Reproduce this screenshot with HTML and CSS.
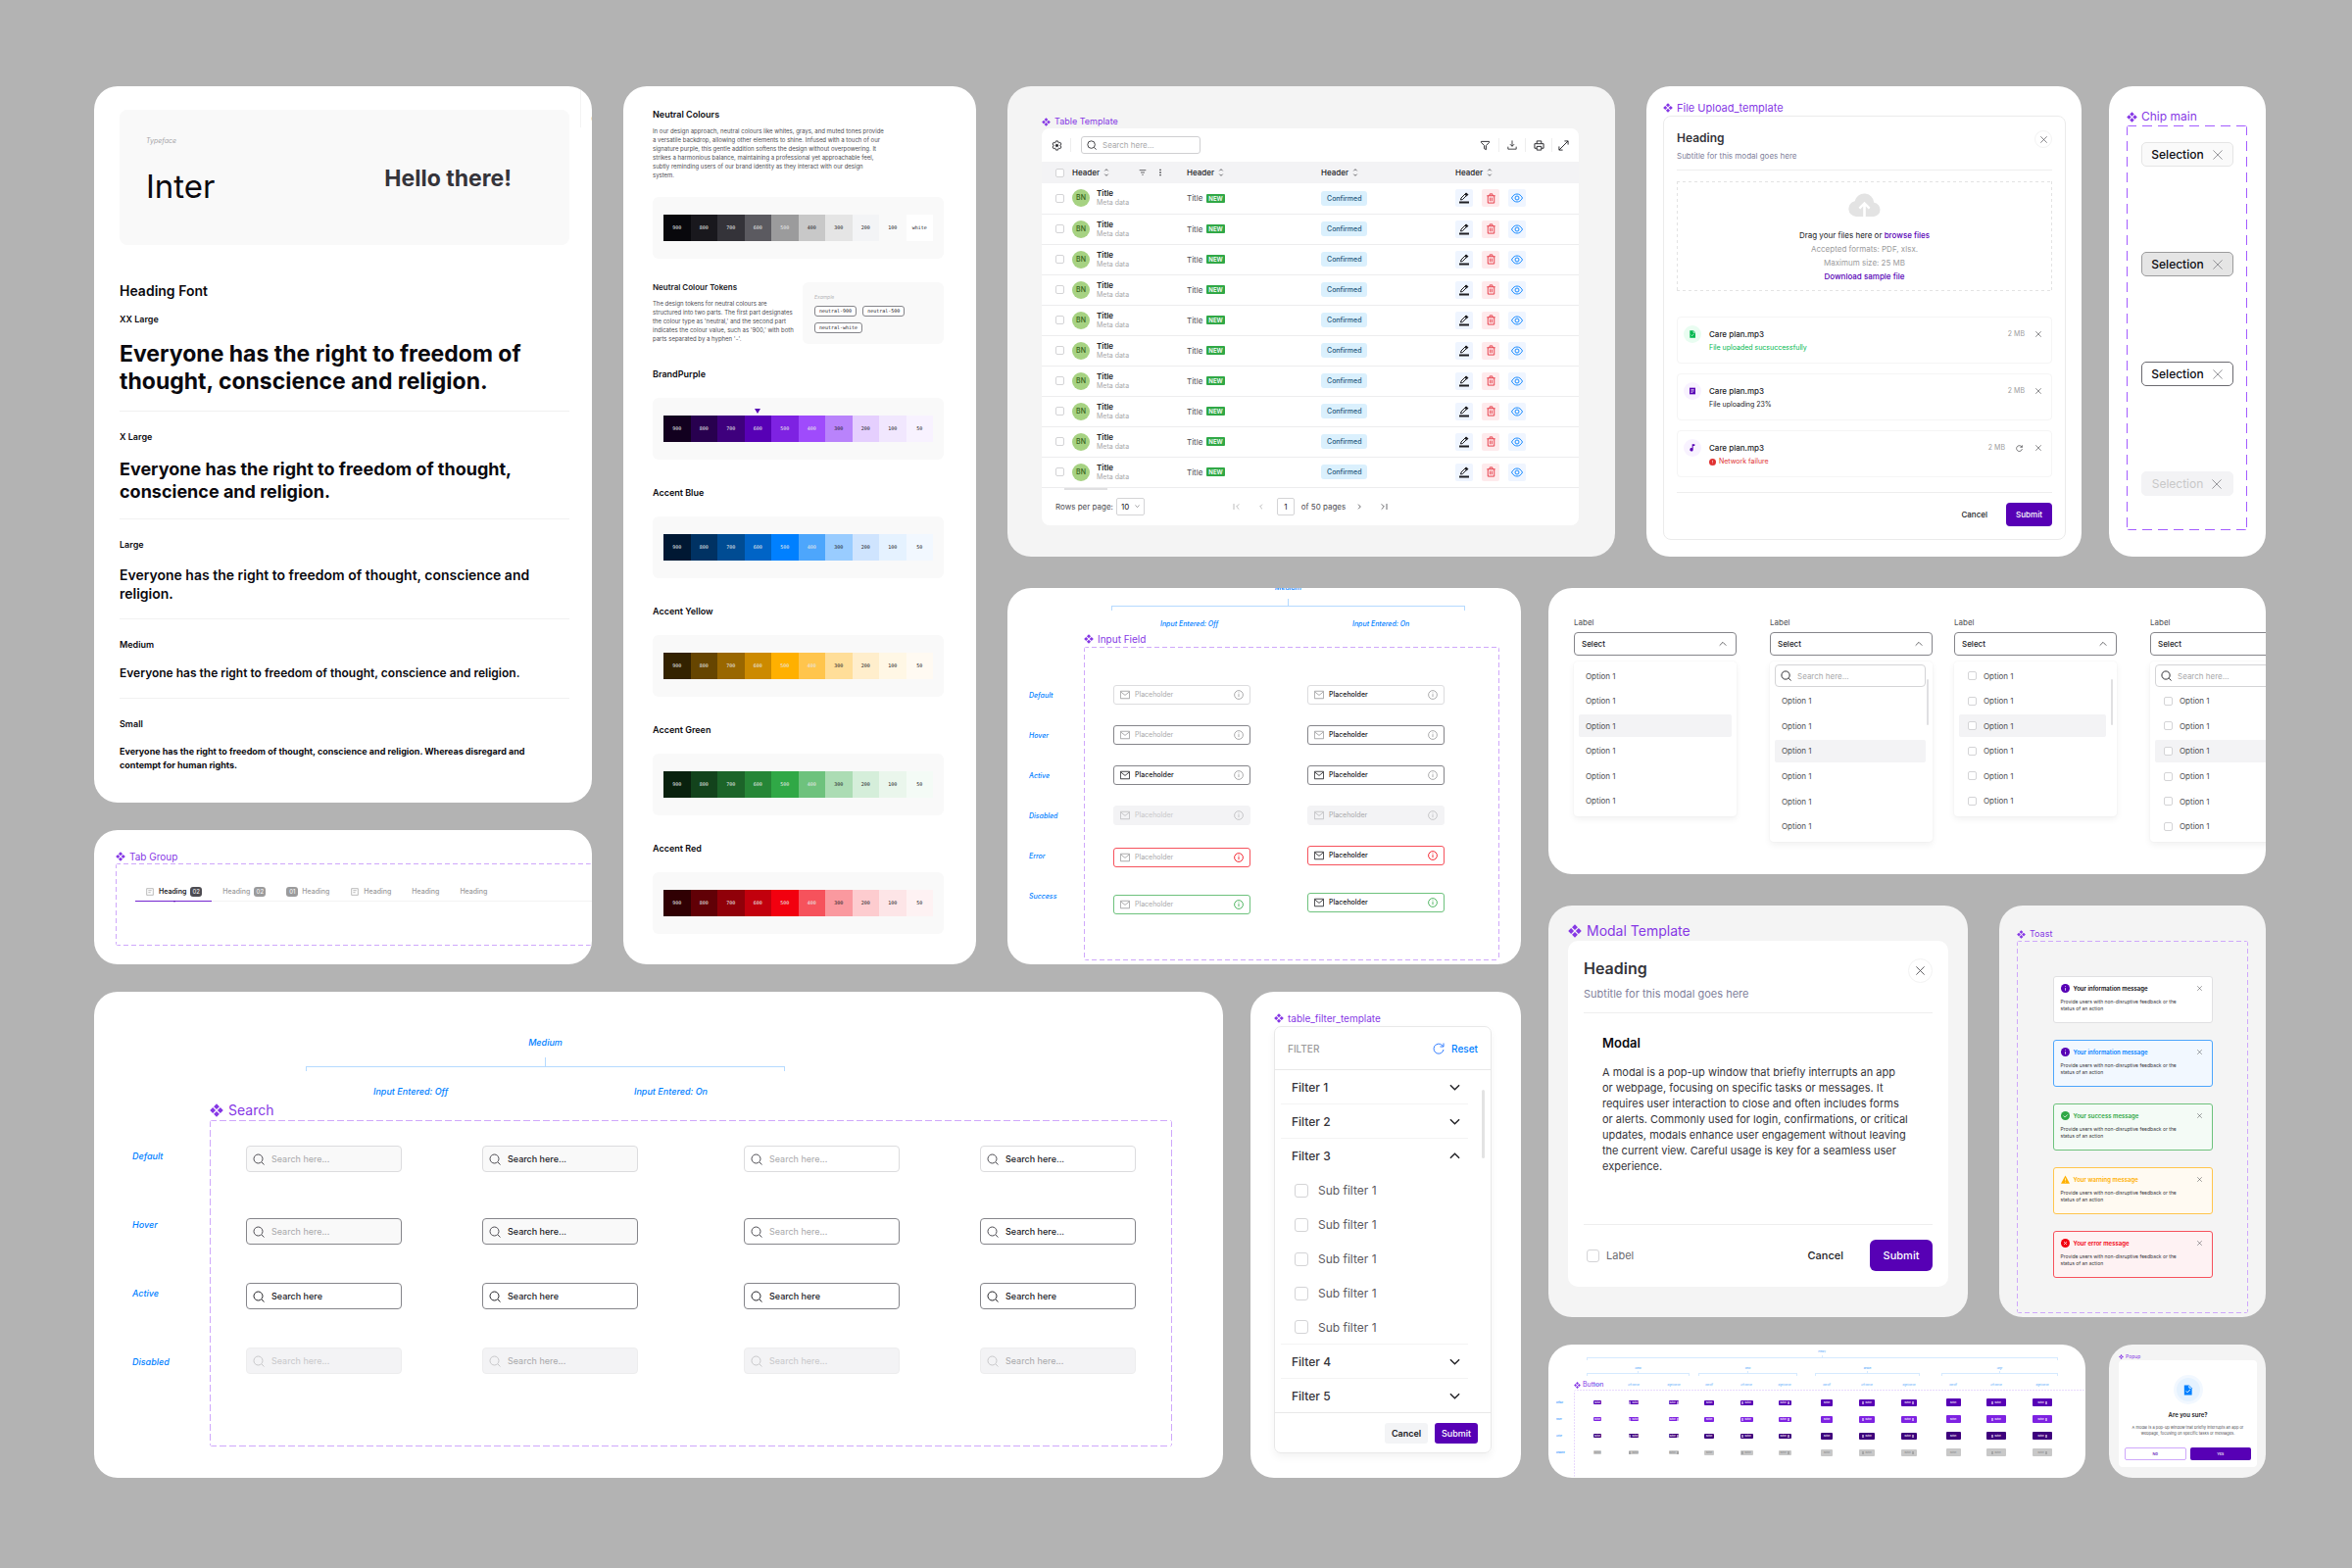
FILE: index.html
```html
<!DOCTYPE html>
<html lang="en">
<head>
<meta charset="utf-8">
<meta name="viewport" content="width=device-width, initial-scale=1">
<title>Design system overview</title>
<link rel="stylesheet" href="styles.css">
</head>
<body>
<svg class="sprite" aria-hidden="true">
  <symbol id="component" viewBox="0 0 12 12"><path fill="currentColor" d="M6 .2 8.5 2.7 6 5.2 3.5 2.7zM9.3 3.5 11.8 6 9.3 8.5 6.8 6zM6 6.8 8.5 9.3 6 11.8 3.5 9.3zM2.7 3.5 5.2 6 2.7 8.5.2 6z"/></symbol>
  <symbol id="gear" viewBox="0 0 24 24"><path d="M19.43 12.98c.04-.32.07-.64.07-.98s-.03-.66-.07-.98l2.11-1.65c.19-.15.24-.42.12-.64l-2-3.46a.5.5 0 0 0-.61-.22l-2.49 1c-.52-.4-1.08-.73-1.69-.98l-.38-2.65A.49.49 0 0 0 14 2h-4c-.25 0-.46.18-.49.42l-.38 2.65c-.61.25-1.17.59-1.69.98l-2.49-1a.5.5 0 0 0-.61.22l-2 3.46c-.13.22-.07.49.12.64l2.11 1.65a8 8 0 0 0 0 1.96l-2.11 1.65c-.19.15-.24.42-.12.64l2 3.46a.5.5 0 0 0 .61.22l2.49-1c.52.4 1.08.73 1.69.98l.38 2.65c.03.24.24.42.49.42h4c.25 0 .46-.18.49-.42l.38-2.65c.61-.25 1.17-.59 1.69-.98l2.49 1a.5.5 0 0 0 .61-.22l2-3.46c.12-.22.07-.49-.12-.64z"/><circle cx="12" cy="12" r="2.500" fill="currentColor"/></symbol>
  <symbol id="search" viewBox="0 0 24 24"><circle cx="11" cy="11" r="9"/><path d="m18 18 5 5"/></symbol>
  <symbol id="funnel" viewBox="0 0 24 24"><path d="M3 3h18v2l-7 7v9l-4-2v-7L3 5z"/></symbol>
  <symbol id="download" viewBox="0 0 24 24"><path d="M12 1v14M7 10l5 5 5-5M2 16v6h20v-6"/></symbol>
  <symbol id="print" viewBox="0 0 24 24"><path d="M7 8V2h10v6M7 18H2V8h20v10h-5M7 14h10v8H7z"/></symbol>
  <symbol id="expand" viewBox="0 0 24 24"><path d="M14 2h8v8M22 2 2 22M2 14v8h8"/></symbol>
  <symbol id="sort" viewBox="0 0 24 24"><path d="m7 7 5-5 5 5M7 17l5 5 5-5"/></symbol>
  <symbol id="lines" viewBox="0 0 24 24"><path d="M2 5h20M6 12h12M10 19h4"/></symbol>
  <symbol id="dots" viewBox="0 0 24 24"><path fill="currentColor" stroke="none" d="M10 2h4v4h-4zM10 10h4v4h-4zM10 18h4v4h-4z"/></symbol>
  <symbol id="pen" viewBox="0 0 24 24"><path d="M5 16l1-4L16 2l3 3L9 15z"/><path fill="currentColor" stroke="none" d="M13 5l3-4 5 4-4 4zM2 19h20v4H2z"/></symbol>
  <symbol id="trash" viewBox="0 0 24 24"><path d="M3 6h18M5 6v16h14V6M9 6V2h6v4M10 10v8M14 10v8"/></symbol>
  <symbol id="eye" viewBox="0 0 24 24"><path d="M1 12c3-6 7-8 11-8s8 2 11 8c-3 6-7 8-11 8S4 18 1 12z"/><circle cx="12" cy="12" r="4"/></symbol>
  <symbol id="down" viewBox="0 0 24 24"><path d="m2 7 10 10L22 7"/></symbol>
  <symbol id="up" viewBox="0 0 24 24"><path d="M2 17 12 7l10 10"/></symbol>
  <symbol id="left" viewBox="0 0 24 24"><path d="m15 5-7 7 7 7"/></symbol>
  <symbol id="right" viewBox="0 0 24 24"><path d="m9 5 7 7-7 7"/></symbol>
  <symbol id="first" viewBox="0 0 24 24"><path d="M3 3v18M19 4l-8 8 8 8"/></symbol>
  <symbol id="last" viewBox="0 0 24 24"><path d="M21 3v18M5 4l8 8-8 8"/></symbol>
  <symbol id="close" viewBox="0 0 24 24"><path d="m1 1 22 22M23 1 1 23"/></symbol>
  <symbol id="cloud" viewBox="0 0 33 24"><path fill="currentColor" stroke="none" d="M8 24A8 8 0 0 1 6.600 8.200 10 10 0 0 1 26.300 9.700 7.200 7.200 0 0 1 26 24h-8.200V13.500l3 3 1.700-1.700-6-6-6 6 1.700 1.700 3-3V24z"/></symbol>
  <symbol id="file" viewBox="0 0 24 24"><path fill="currentColor" stroke="none" d="M4 1h11l6 6v16H4z"/><path stroke="#fff" d="m8 14 3 3 6-6M15 2v5h5"/></symbol>
  <symbol id="list" viewBox="0 0 24 24"><path fill="currentColor" stroke="none" d="M3 2h18v20H3z"/><path stroke="#fff" d="M7 8h10M7 12h10M7 16h6"/></symbol>
  <symbol id="note" viewBox="0 0 24 24"><path d="M2 2h20v20H2zM7 8h10M7 14h7"/></symbol>
  <symbol id="music" viewBox="0 0 24 24"><path fill="currentColor" stroke="none" d="M11 1h8v5h-5v12a5 5 0 1 1-3-5z"/></symbol>
  <symbol id="reload" viewBox="0 0 24 24"><path d="M22 14a10 10 0 1 1-3-9l3 3M22 1v7h-7"/></symbol>
  <symbol id="alert" viewBox="0 0 24 24"><circle cx="12" cy="12" r="12" fill="currentColor" stroke="none"/><path stroke="#fff" d="M12 6v7M12 16v2"/></symbol>
  <symbol id="notice" viewBox="0 0 24 24"><circle cx="12" cy="12" r="12" fill="currentColor" stroke="none"/><path stroke="#fff" d="M12 6v2M12 11v7"/></symbol>
  <symbol id="done" viewBox="0 0 24 24"><circle cx="12" cy="12" r="12" fill="currentColor" stroke="none"/><path stroke="#fff" d="m7 12 4 4 7-7"/></symbol>
  <symbol id="warn" viewBox="0 0 24 24"><path fill="currentColor" stroke="none" d="M12 1 24 23H0z"/><path stroke="#fff" d="M12 9v6M12 18v2"/></symbol>
  <symbol id="fail" viewBox="0 0 24 24"><circle cx="12" cy="12" r="12" fill="currentColor" stroke="none"/><path stroke="#fff" d="m8 8 8 8M16 8l-8 8"/></symbol>
  <symbol id="mail" viewBox="0 0 24 24"><path d="M1 3h22v18H1zM2 5l10 8L22 5"/></symbol>
  <symbol id="info" viewBox="0 0 24 24"><circle cx="12" cy="12" r="10.500"/><path d="M12 10v7M12 6v2"/></symbol>
</svg>

<main class="board">
  <div class="area-left">
    <div class="stack">
      <section class="panel type-panel">
        <span class="clip-rule"></span><span class="clip-text">C</span>
        <div class="hero">
          <div>
            <p class="hero-note">Typeface</p>
            <p class="hero-name">Inter</p>
          </div>
          <p class="hero-hello">Hello there!</p>
        </div>
        <h2>Heading Font</h2>
        <div class="sample"><h3>XX Large</h3><p class="t-xxl">Everyone has the right to freedom of<br>thought, conscience and religion.</p></div>
        <div class="sample"><h3>X Large</h3><p class="t-xl">Everyone has the right to freedom of thought,<br>conscience and religion.</p></div>
        <div class="sample"><h3>Large</h3><p class="t-l">Everyone has the right to freedom of thought, conscience and<br>religion.</p></div>
        <div class="sample"><h3>Medium</h3><p class="t-m">Everyone has the right to freedom of thought, conscience and religion.</p></div>
        <div class="sample"><h3>Small</h3><p class="t-s">Everyone has the right to freedom of thought, conscience and religion. Whereas disregard and<br>contempt for human rights.</p></div>
      </section>

      <section class="panel tab-panel">
        <h2 class="tag tag-10"><svg class="icon i10"><use href="#component"/></svg>Tab Group</h2>
        <div class="frame tab-frame">
          <div class="tabs" role="tablist">
            <button class="tab is-active" role="tab" aria-selected="true"><svg class="icon i8"><use href="#note"/></svg>Heading<b>02</b></button>
            <button class="tab" role="tab">Heading<b>02</b></button>
            <button class="tab" role="tab"><b>01</b>Heading</button>
            <button class="tab" role="tab"><svg class="icon i8"><use href="#note"/></svg>Heading</button>
            <button class="tab" role="tab">Heading</button>
            <button class="tab" role="tab">Heading</button>
          </div>
        </div>
      </section>
    </div>

    <section class="panel colour-panel">
      <h2>Neutral Colours</h2>
      <p class="copy">In our design approach, neutral colours like whites, grays, and muted tones provide<br>a versatile backdrop, allowing other elements to shine. Infused with a touch of our<br>signature purple, this gentle addition softens the design without overpowering. It<br>strikes a harmonious balance, maintaining a professional yet approachable feel,<br>subtly reminding users of our brand identity as they interact with our design<br>system.</p>
      <div class="ramp ramp-first" data-ramp="neutral"></div>
      <div class="tokens">
        <div>
          <h3>Neutral Colour Tokens</h3>
          <p class="copy">The design tokens for neutral colours are<br>structured into two parts. The first part designates<br>the colour type as 'neutral,' and the second part<br>indicates the colour value, such as '900,' with both<br>parts separated by a hyphen '-'.</p>
        </div>
        <div class="token-box">
          <p>Example</p>
          <ul><li>neutral-900</li><li>neutral-500</li><li>neutral-white</li></ul>
        </div>
      </div>
      <h2>BrandPurple</h2><div class="ramp ramp-marked" data-ramp="purple"></div>
      <h2>Accent Blue</h2><div class="ramp" data-ramp="blue"></div>
      <h2>Accent Yellow</h2><div class="ramp" data-ramp="yellow"></div>
      <h2>Accent Green</h2><div class="ramp" data-ramp="green"></div>
      <h2>Accent Red</h2><div class="ramp" data-ramp="red"></div>
    </section>
  </div>

  <div class="area-top">
    <section class="panel table-panel">
      <h2 class="tag tag-9"><svg class="icon i9"><use href="#component"/></svg>Table Template</h2>
      <div class="table-card">
        <div class="toolbar">
          <button class="tool" aria-label="Settings"><svg class="icon i11"><use href="#gear"/></svg></button>
          <span class="sep"></span>
          <div class="table-search"><svg class="icon i10"><use href="#search"/></svg><input aria-label="Search table" placeholder="Search here..."></div>
          <div class="tools">
            <button class="tool" aria-label="Filter"><svg class="icon i11"><use href="#funnel"/></svg></button>
            <button class="tool" aria-label="Download"><svg class="icon i10"><use href="#download"/></svg></button>
            <button class="tool" aria-label="Print"><svg class="icon i11"><use href="#print"/></svg></button>
            <button class="tool" aria-label="Expand"><svg class="icon i11"><use href="#expand"/></svg></button>
          </div>
        </div>
        <table>
          <colgroup><col class="c-check"><col class="c-main"><col class="c-mid"><col class="c-mid"><col></colgroup>
          <thead><tr>
            <th><input type="checkbox" class="check c9" aria-label="Select all"></th>
            <th><span class="th">Header<svg class="icon i8"><use href="#sort"/></svg><svg class="icon i8 th-lines"><use href="#lines"/></svg><svg class="icon i8 th-dots"><use href="#dots"/></svg></span></th>
            <th><span class="th">Header<svg class="icon i8"><use href="#sort"/></svg></span></th>
            <th><span class="th">Header<svg class="icon i8"><use href="#sort"/></svg></span></th>
            <th><span class="th">Header<svg class="icon i8"><use href="#sort"/></svg></span></th>
          </tr></thead>
          <tbody id="rows"></tbody>
        </table>
        <div class="table-foot">
          <div class="per-page"><label for="per">Rows per page:</label><span class="select-box"><select id="per"><option>10</option></select><svg class="icon i5"><use href="#down"/></svg></span></div>
          <div class="pager">
            <button class="off" aria-label="First page"><svg class="icon i8"><use href="#first"/></svg></button>
            <button class="off" aria-label="Previous page"><svg class="icon i8"><use href="#left"/></svg></button>
            <input aria-label="Page" value="1"><span>of 50 pages</span>
            <button aria-label="Next page"><svg class="icon i8"><use href="#right"/></svg></button>
            <button aria-label="Last page"><svg class="icon i8"><use href="#last"/></svg></button>
          </div>
          <span class="h-scroll"></span>
        </div>
      </div>
    </section>

    <section class="panel upload-panel">
      <h2 class="tag tag-11"><svg class="icon i10"><use href="#component"/></svg>File Upload_template</h2>
      <div class="upload-card">
        <header><div><h3>Heading</h3><p>Subtitle for this modal goes here</p></div><button class="round" aria-label="Close"><svg class="icon i7"><use href="#close"/></svg></button></header>
        <div class="drop">
          <svg class="cloud"><use href="#cloud"/></svg>
          <p class="dark">Drag your files here or <a href="#">browse files</a></p>
          <p>Accepted formats: PDF, xlsx.</p>
          <p>Maximum size: 25 MB</p>
          <p><a href="#">Download sample file</a></p>
        </div>
        <ul class="files">
          <li class="ok"><span class="disc"><svg class="icon i8"><use href="#file"/></svg></span><div><h4>Care plan.mp3</h4><p>File uploaded sucsuccessfully</p></div><span class="size">2 MB</span><button aria-label="Remove"><svg class="icon i6"><use href="#close"/></svg></button></li>
          <li><span class="disc"><svg class="icon i8"><use href="#list"/></svg></span><div><h4>Care plan.mp3</h4><p>File uploading 23%</p></div><span class="size">2 MB</span><button aria-label="Remove"><svg class="icon i6"><use href="#close"/></svg></button></li>
          <li class="bad"><span class="disc"><svg class="icon i8"><use href="#music"/></svg></span><div><h4>Care plan.mp3</h4><p><svg class="icon i7"><use href="#alert"/></svg>Network failure</p></div><span class="size">2 MB</span><button class="retry" aria-label="Retry"><svg class="icon i7"><use href="#reload"/></svg></button><button aria-label="Remove"><svg class="icon i6"><use href="#close"/></svg></button></li>
        </ul>
        <footer><button class="plain">Cancel</button><button class="solid">Submit</button></footer>
      </div>
    </section>

    <section class="panel chip-panel">
      <h2 class="tag tag-12"><svg class="icon i11"><use href="#component"/></svg>Chip main</h2>
      <div class="frame chip-frame">
        <button class="chip">Selection<svg class="icon i10"><use href="#close"/></svg></button>
        <button class="chip is-hover">Selection<svg class="icon i10"><use href="#close"/></svg></button>
        <button class="chip is-active">Selection<svg class="icon i10"><use href="#close"/></svg></button>
        <button class="chip" disabled>Selection<svg class="icon i10"><use href="#close"/></svg></button>
      </div>
    </section>
  </div>

  <section class="panel area-mid input-panel">
    <div class="axis">
      <p>Medium</p><div class="bracket"></div>
      <div class="axis-pair"><span>Input Entered: Off</span><span>Input Entered: On</span></div>
    </div>
    <h2 class="tag tag-10"><svg class="icon i10"><use href="#component"/></svg>Input Field</h2>
    <ul class="states"><li>Default</li><li>Hover</li><li>Active</li><li>Disabled</li><li>Error</li><li>Success</li></ul>
    <div class="frame field-grid" id="fields"></div>
  </section>

  <div class="area-right">
    <section class="panel select-panel" id="selects"></section>
    <div class="row-modal">
      <section class="panel modal-panel">
        <h2 class="tag tag-14"><svg class="icon i14"><use href="#component"/></svg>Modal Template</h2>
        <div class="modal">
          <header><div><h3>Heading</h3><p>Subtitle for this modal goes here</p></div><button class="round" aria-label="Close"><svg class="icon i9"><use href="#close"/></svg></button></header>
          <div class="modal-body"><h4>Modal</h4><p>A modal is a pop-up window that briefly interrupts an app<br>or webpage, focusing on specific tasks or messages. It<br>requires user interaction to close and often includes forms<br>or alerts. Commonly used for login, confirmations, or critical<br>updates, modals enhance user engagement without leaving<br>the current view. Careful usage is key for a seamless user<br>experience.</p></div>
          <footer><label><input type="checkbox" class="check c13">Label</label><button class="plain">Cancel</button><button class="solid">Submit</button></footer>
        </div>
      </section>
      <section class="panel toast-panel">
        <h2 class="tag tag-9"><svg class="icon i9"><use href="#component"/></svg>Toast</h2>
        <div class="frame toast-frame">
          <article class="toast"><svg class="icon i9"><use href="#notice"/></svg><h3>Your information message</h3><button aria-label="Dismiss"><svg class="icon i5"><use href="#close"/></svg></button><p>Provide users with non-disruptive feedback or the<br>status of an action</p></article>
          <article class="toast t-blue"><svg class="icon i9"><use href="#notice"/></svg><h3>Your information message</h3><button aria-label="Dismiss"><svg class="icon i5"><use href="#close"/></svg></button><p>Provide users with non-disruptive feedback or the<br>status of an action</p></article>
          <article class="toast t-green"><svg class="icon i9"><use href="#done"/></svg><h3>Your success message</h3><button aria-label="Dismiss"><svg class="icon i5"><use href="#close"/></svg></button><p>Provide users with non-disruptive feedback or the<br>status of an action</p></article>
          <article class="toast t-yellow"><svg class="icon i9"><use href="#warn"/></svg><h3>Your warning message</h3><button aria-label="Dismiss"><svg class="icon i5"><use href="#close"/></svg></button><p>Provide users with non-disruptive feedback or the<br>status of an action</p></article>
          <article class="toast t-red"><svg class="icon i9"><use href="#fail"/></svg><h3>Your error message</h3><button aria-label="Dismiss"><svg class="icon i5"><use href="#close"/></svg></button><p>Provide users with non-disruptive feedback or the<br>status of an action</p></article>
        </div>
      </section>
    </div>
    <div class="row-button">
      <section class="panel button-panel">
        <div class="matrix-top">
          <p>Primary</p><div class="bracket matrix-bracket"></div>
          <div class="groups">
            <div><span>XSmall</span><div class="bracket"></div></div>
            <div><span>Small</span><div class="bracket"></div></div>
            <div class="g-medium"><span>Medium</span><div class="bracket"></div></div>
            <div><span>Large</span><div class="bracket"></div></div>
          </div>
        </div>
        <div class="matrix-mid"><h2 class="tag tag-7"><svg class="icon i7"><use href="#component"/></svg>Button</h2><div class="cols" id="variants"></div></div>
        <ul class="states"><li>Default</li><li>Hover</li><li>Active</li><li>Disabled</li></ul>
        <div class="frame matrix" id="matrix"></div>
      </section>
      <section class="panel popup-panel">
        <h2 class="tag tag-5"><svg class="icon i5"><use href="#component"/></svg>Popup</h2>
        <div class="popup">
          <span class="halo"><svg class="icon i11"><use href="#file"/></svg></span>
          <h3>Are you sure?</h3>
          <p>A modal is a pop-up window that briefly interrupts an app or<br>webpage, focusing on specific tasks or messages.</p>
          <footer><button class="outline">No</button><button class="solid">Yes</button></footer>
        </div>
      </section>
    </div>
  </div>

  <div class="area-bottom">
    <section class="panel search-panel">
      <div class="axis">
        <p>Medium</p><div class="bracket"></div>
        <div class="axis-pair"><span>Input Entered: Off</span><span>Input Entered: On</span></div>
      </div>
      <h2 class="tag tag-14"><svg class="icon i14"><use href="#component"/></svg>Search</h2>
      <ul class="states"><li>Default</li><li>Hover</li><li>Active</li><li>Disabled</li></ul>
      <div class="frame search-frame"><div class="search-grid"></div><div class="search-grid is-clear"></div></div>
    </section>

    <section class="panel filter-panel">
      <h2 class="tag tag-10"><svg class="icon i10"><use href="#component"/></svg>table_filter_template</h2>
      <div class="filter-card">
        <header><span>FILTER</span><button><svg class="icon i12"><use href="#reload"/></svg>Reset</button></header>
        <div class="filter-list">
          <span class="v-scroll"></span>
          <button>Filter 1<svg class="icon i11"><use href="#down"/></svg></button>
          <button>Filter 2<svg class="icon i11"><use href="#down"/></svg></button>
          <button class="is-open" aria-expanded="true">Filter 3<svg class="icon i11"><use href="#up"/></svg></button>
          <div class="subs">
            <label><input type="checkbox" class="check c14">Sub filter 1</label>
            <label><input type="checkbox" class="check c14">Sub filter 1</label>
            <label><input type="checkbox" class="check c14">Sub filter 1</label>
            <label><input type="checkbox" class="check c14">Sub filter 1</label>
            <label><input type="checkbox" class="check c14">Sub filter 1</label>
          </div>
          <button>Filter 4<svg class="icon i11"><use href="#down"/></svg></button>
          <button>Filter 5<svg class="icon i11"><use href="#down"/></svg></button>
        </div>
        <footer><button class="soft">Cancel</button><button class="solid">Submit</button></footer>
      </div>
    </section>
  </div>
</main>
<script src="app.js"></script>
</body>
</html>
```
FILE: styles.css
```css
:root {
  --purple: #5700b5;
  --label: #8638e5;
  --blue: #0080ff;
  --ink: #202024;
  --mid: #9b9b9c;
}

* { box-sizing: border-box; }
body { margin: 0; background: #b3b3b3; color: var(--ink); font-family: Inter, "Liberation Sans", sans-serif; }
h2, h3, h4, p, ul { margin: 0; padding: 0; }
ul { list-style: none; }
button, input, select { margin: 0; padding: 0; border: 0; background: none; color: inherit; font: inherit; letter-spacing: inherit; }
button { display: flex; align-items: center; justify-content: center; }
input, select { min-width: 0; outline: 0; }
select { appearance: none; opacity: 1; }
a { color: var(--purple); font-weight: 500; text-decoration: none; }

.sprite { position: absolute; width: 0; height: 0; }
.icon { display: block; flex: none; fill: none; stroke: currentColor; stroke-width: 2; }
.tag .icon, .cloud { stroke: none; }
.i5 { width: 5px; height: 5px; }
.i6 { width: 6px; height: 6px; }
.i7 { width: 7px; height: 7px; }
.i8 { width: 8px; height: 8px; }
.i9 { width: 9px; height: 9px; }
.i10 { width: 10px; height: 10px; }
.i11 { width: 11px; height: 11px; }
.i12 { width: 12px; height: 12px; }
.i14 { width: 14px; height: 14px; }

.check { appearance: none; flex: none; border: 1px solid #d4d4d6; background: #fff; }
.c9 { width: 9px; height: 9px; border-radius: 2px; }
.c13 { width: 13px; height: 13px; border-radius: 3px; }
.c14 { width: 14px; height: 14px; border-radius: 3px; }

.board {
  display: grid;
  grid-template: "left top top" minmax(484px, auto) "left mid right" minmax(384px, auto) "bottom bottom right" minmax(496px, auto) / minmax(0, 904fr) minmax(0, 524fr) minmax(0, 732fr);
  gap: 28px;
  padding: 88px 88px 92px 96px;
}
.panel { position: relative; overflow: hidden; min-width: 0; border-radius: 24px; background: #fff; }
.area-left { grid-area: left; display: grid; grid-template-columns: minmax(0, 508fr) minmax(0, 360fr); gap: 32px; padding-right: 4px; }
.stack { display: flex; flex-direction: column; gap: 28px; }
.area-top { grid-area: top; display: grid; grid-template-columns: minmax(0, 624fr) minmax(0, 444fr) minmax(0, 160fr); gap: 28px; padding-bottom: 4px; }
.area-mid { grid-area: mid; }
.area-right { grid-area: right; display: grid; grid-template-rows: minmax(292px, auto) auto 1fr; }
.area-bottom { grid-area: bottom; display: grid; grid-template-columns: minmax(0, 1152fr) minmax(0, 276fr); gap: 28px; }

.tag { display: flex; align-items: center; gap: 4px; color: var(--label); font-weight: 400; white-space: nowrap; }
.tag-5 { gap: 2px; font-size: 5px; line-height: 8px; }
.tag-7 { gap: 2px; font-size: 7px; line-height: 10px; }
.tag-9 { font-size: 9px; line-height: 14px; }
.tag-10 { font-size: 10px; line-height: 16px; }
.tag-11 { font-size: 11px; line-height: 16px; }
.tag-12 { font-size: 12px; line-height: 18px; }
.tag-14 { gap: 5px; font-size: 14px; line-height: 20px; }

/* Component-set outline with long dashes on all four sides */
.frame {
  --c: #cfa8fb;
  --d: 5px;
  --p: 8px;
  background:
    repeating-linear-gradient(90deg, var(--c) 0 var(--d), transparent var(--d) var(--p)) top / 100% 1px no-repeat,
    repeating-linear-gradient(90deg, var(--c) 0 var(--d), transparent var(--d) var(--p)) bottom / 100% 1px no-repeat,
    repeating-linear-gradient(180deg, var(--c) 0 var(--d), transparent var(--d) var(--p)) left / 1px 100% no-repeat,
    repeating-linear-gradient(180deg, var(--c) 0 var(--d), transparent var(--d) var(--p)) right / 1px 100% no-repeat;
  border-radius: 3px;
}

/* Typography */
.type-panel { flex: 732 0 auto; padding: 24px 23px 24px 26px; color: #0b0a0f; }
.clip-rule { position: absolute; top: 4px; right: 11px; width: 1px; height: 38px; background: #f3f3f3; }
.clip-text { position: absolute; top: 28px; right: -5px; color: #999; font-size: 8px; line-height: 10px; }
.hero { display: flex; justify-content: space-between; padding: 27px 59px 41px 27px; border-radius: 8px; background: #f9f9f9; }
.hero-note { color: #a5a5a8; font-size: 7px; font-style: italic; line-height: 10px; }
.hero-name { margin-top: 22px; color: #0b0a0f; font-size: 33px; line-height: 38px; }
.hero-hello { margin-top: 28px; color: #35343a; font-size: 23px; font-weight: 700; line-height: 30px; }
.type-panel h2 { margin: 38px 0 14px; font-size: 14px; font-weight: 600; line-height: 18px; }
.sample h3 { font-size: 9px; font-weight: 600; line-height: 12px; }
.sample p { margin-top: 15px; font-weight: 700; white-space: nowrap; }
.sample + .sample { margin-top: 16px; padding-top: 20px; border-top: 1px solid #f1f1f1; }
.t-xxl { font-size: 23px; line-height: 28px; }
.t-xl { font-size: 18px; line-height: 23px; }
.sample .t-l { font-size: 14px; font-weight: 600; line-height: 19px; }
.sample .t-m { font-size: 12px; font-weight: 600; line-height: 15px; padding-bottom: 2px; }
.t-s { font-size: 9px; line-height: 14px; }

.tab-panel { flex: 136 0 auto; padding: 20px 0 18px 22px; }
.tab-panel .tag { line-height: 14px; }
.tab-frame { padding: 17px 0 45px 20px; background-size: 100% 1px, 100% 1px, 1px 100%, 0 0; }
.tabs { display: flex; gap: 1px; border-bottom: 1px solid #f3f3f3; }
.tab { position: relative; gap: 4px; height: 21px; padding: 4px 10px 0; color: var(--mid); font-size: 7px; font-weight: 500; line-height: 10px; }
.tab b { width: 12px; border-radius: 3px; background: var(--mid); color: #fff; font-size: 6px; font-weight: 400; line-height: 10px; text-align: center; }
.tab .icon { margin: 0 1px; }
.tab.is-active { margin-bottom: -1px; height: 22px; border-bottom: 1px solid #7424d0; color: var(--ink); font-weight: 600; }
.tab.is-active .icon { color: var(--mid); }
.tab.is-active b { background: #4d4c52; }
.tab.is-active::after { content: ""; position: absolute; top: 21px; left: 50%; border: 1px solid transparent; border-top: 2px solid var(--purple); }

/* Colour ramps */
.colour-panel { padding: 23px 33px 30px 30px; }
.colour-panel h2 { margin-top: 28px; font-size: 9px; font-weight: 600; line-height: 11px; color: #0b0a0f; }
.colour-panel h2:first-child { margin-top: 0; }
.copy { margin-top: 7px; color: #4d4c52; font-size: 6px; line-height: 9px; white-space: nowrap; }
.ramp { display: flex; margin-top: 19px; padding: 18px 11px; border-radius: 6px; background: #f9f9f9; }
.ramp-first { margin-top: 18px; }
.ramp span { position: relative; flex: 1; height: 27px; text-align: center; font: 5px/27px "DejaVu Sans Mono", "Liberation Mono", monospace; }
.ramp .on-dark { color: #e8e8e8; }
.ramp-marked span:nth-child(4)::before { content: ""; position: absolute; top: -7px; left: 50%; margin-left: -3px; border: 3px solid transparent; border-top: 5px solid var(--purple); border-bottom: 0; }
.tokens { display: grid; grid-template-columns: 1fr 144px; margin: 24px 0 25px; }
.tokens h3 { font-size: 8px; font-weight: 600; line-height: 10px; }
.tokens + h2 { margin-top: 0; }
.token-box { padding: 11px 12px; border-radius: 6px; background: #f9f9f9; }
.token-box p { color: #b5b5b8; font-size: 5px; font-style: italic; line-height: 8px; }
.token-box ul { display: flex; flex-wrap: wrap; gap: 6px; margin-top: 5px; }
.token-box li { padding: 0 4px; border: 1px solid #85858a; border-radius: 3px; background: #fff; font: 5px/9px "DejaVu Sans Mono", "Liberation Mono", monospace; }

/* Table */
.table-panel { margin-right: 4px; padding: 29px 37px 0 35px; background: #f4f4f4; }
.table-card { overflow: hidden; border-radius: 8px; background: #fff; font-size: 8px; line-height: 10px; }
.toolbar { display: flex; align-items: center; height: 34px; padding: 0 10px; }
.sep { width: 1px; height: 14px; margin: 0 10px 0 8px; background: #eee; }
.table-search { display: flex; align-items: center; gap: 6px; width: 122px; height: 18px; padding: 0 5px; border: 1px solid #cfcfd1; border-radius: 3px; }
.table-search input { flex: 1; }
input::placeholder { color: #a8a8aa; opacity: 1; }
.tools { display: flex; margin-left: auto; }
.tool { height: 14px; }
.tools .tool { width: 27px; }
.tools .tool:last-child { width: 18px; justify-content: flex-end; }
.tools .tool + .tool { border-left: 1px solid #eee; }
table { width: 100%; border-collapse: collapse; table-layout: fixed; }
.c-check { width: 31px; }
.c-main { width: 117px; }
.c-mid { width: 137px; }
th, td { padding: 0; text-align: left; }
th { height: 22px; background: #f3f3f5; font-weight: 500; }
th:first-child, td:first-child { padding-left: 14px; }
th .check, td .check { display: block; }
.th { display: flex; align-items: center; gap: 3px; }
.th .th-lines { margin-left: 26px; }
.th .th-dots { margin-left: 7px; }
td { height: 31px; border-bottom: 1px solid #ededee; }
.person { display: grid; grid-template-columns: 18px 1fr; column-gap: 7px; align-items: center; }
.person i { grid-row: span 2; height: 18px; border-radius: 50%; background: #a6d282; color: #35611b; font-size: 7px; font-style: normal; font-weight: 500; line-height: 18px; text-align: center; }
.person b { font-weight: 600; }
.person small { color: #a8a8aa; font-size: 7px; }
.new { display: flex; align-items: center; gap: 4px; color: #4d4c52; }
.new b { padding: 0 2px; border-radius: 1px; background: #30a846; color: #fff; font-size: 6px; font-weight: 600; line-height: 9px; }
.pill { padding: 3px 6px; border-radius: 3px; background: #daf0fd; color: #285a7e; font-size: 7px; font-weight: 500; }
.acts { display: flex; gap: 9px; }
.acts button { width: 18px; height: 18px; border-radius: 2px; background: #eff5ff; }
.acts .del { background: #feeaec; color: #e5333f; }
.acts .see { color: #1a8cff; }
.table-foot { position: relative; display: grid; grid-template-columns: 1fr auto 1fr; align-items: center; height: 38px; padding: 0 14px; color: #4d4c52; }
.h-scroll { position: absolute; top: 0; left: 23px; width: 44px; height: 2px; background: #e0e0e2; }
.per-page { display: flex; align-items: center; gap: 3px; }
.select-box { display: flex; align-items: center; height: 18px; padding: 0 4px; border: 1px solid #d4d4d6; border-radius: 2px; color: var(--ink); }
.select-box select { width: 14px; }
.pager { display: flex; align-items: center; }
.pager button { width: 24px; height: 18px; color: var(--ink); }
.pager button + button { margin-left: 1px; }
.pager .off { color: var(--mid); }
.pager input { width: 18px; height: 18px; margin: 0 7px 0 4px; border: 1px solid #d4d4d6; border-radius: 2px; color: var(--ink); text-align: center; }
.pager span { margin-right: 2px; }

/* Shared buttons */
.solid { background: var(--purple); color: #fff; font-weight: 500; }
.soft { background: #f3f4f6; font-weight: 600; }
.plain { font-weight: 500; }
.outline { border: 1px solid #cfa8fb; color: var(--purple); font-weight: 500; }
.round { flex: none; border: 1px solid #f3f3f3; border-radius: 50%; color: #35343a; }

/* File upload */
.upload-panel { padding: 14px 16px 17px 17px; }
.upload-card { padding: 0 13px; border: 1px solid #ebebeb; border-radius: 8px; font-size: 8px; line-height: 10px; }
.upload-card header { display: flex; justify-content: space-between; padding: 14px 0 9px; border-bottom: 1px solid #eee; }
.upload-card h3 { font-size: 12px; font-weight: 600; line-height: 15px; color: #35343a; }
.upload-card header p { margin-top: 6px; color: #817f9b; }
.upload-card .round { width: 18px; height: 18px; }
.drop {
  margin-top: 11px;
  padding: 12px 0 8px;
  text-align: center;
  color: var(--mid);
  line-height: 14px;
  background:
    repeating-linear-gradient(90deg, #e3e3e3 0 3px, transparent 3px 6px) top / 100% 1px no-repeat,
    repeating-linear-gradient(90deg, #e3e3e3 0 3px, transparent 3px 6px) bottom / 100% 1px no-repeat,
    repeating-linear-gradient(180deg, #e3e3e3 0 3px, transparent 3px 6px) left / 1px 100% no-repeat,
    repeating-linear-gradient(180deg, #e3e3e3 0 3px, transparent 3px 6px) right / 1px 100% no-repeat;
}
.cloud { display: block; width: 33px; height: 24px; margin: 0 auto 12px; color: #e3e3e3; }
.drop .dark { color: var(--ink); }
.files { display: grid; gap: 10px; margin-top: 26px; }
.files li { display: flex; gap: 8px; height: 48px; padding: 8px 7px 0 6px; border: 1px solid #f5f5f5; border-radius: 4px; }
.files div { flex: 1; padding-top: 4px; }
.files h4 { font-size: 8px; font-weight: 500; }
.files p { display: flex; align-items: center; gap: 3px; margin-top: 4px; font-size: 7px; }
.files .ok p { color: #00b84f; }
.files .bad p { color: #e03131; }
.disc { display: grid; place-items: center; width: 18px; height: 18px; border-radius: 50%; background: #f8f2ff; color: var(--purple); }
.ok .disc { background: #e9fdf1; color: #00b84f; }
.size { color: var(--mid); font-size: 7px; line-height: 18px; }
.files button { width: 12px; height: 18px; }
.upload-card footer { display: flex; justify-content: flex-end; gap: 19px; margin-top: 15px; padding: 10px 0 13px; border-top: 1px solid #eee; }
.upload-card .solid { width: 47px; height: 24px; border-radius: 4px; }

/* Chips */
.chip-panel { padding: 22px 19px 0 18px; }
.chip-frame { --c: #a35cff; --d: 10px; --p: 16px; display: flex; flex-direction: column; align-items: center; gap: 87px; padding: 17px 0 35px; }
.chip { gap: 9px; width: 94px; height: 25px; border: 1px solid #e5e5e5; border-radius: 5px; background: #fafafa; color: #0b0a0f; font-size: 12px; font-weight: 500; }
.chip .icon { color: #85858a; }
.chip.is-hover { border-color: #9b9b9c; background: #e5e5e5; }
.chip.is-active { border-color: #6b6a70; background: #fff; }
.chip:disabled { border-color: #f3f3f5; background: #f3f3f5; color: #c8c8c8; font-weight: 400; }

/* State sheets: axis on top, state names on the left */
.input-panel, .search-panel { display: grid; align-content: start; }
.axis { grid-column: 2; color: var(--blue); font-style: italic; font-weight: 500; }
.axis p { text-align: center; }
.axis-pair { display: grid; }
.bracket { color: #b5daff; }
.bracket::before { content: ""; display: block; width: 1px; height: var(--stem, 7px); margin: 0 auto; background: currentColor; }
.bracket::after { content: ""; display: block; height: 4px; border: 1px solid; border-bottom: 0; }
.input-panel > .tag, .search-panel > .tag { grid-column: 2; }
.states { display: flex; flex-direction: column; color: var(--blue); font-style: italic; font-weight: 500; }

.input-panel { grid-template-columns: 56px minmax(0, 1fr); padding: 0 22px; font-size: 7px; line-height: 10px; }
.input-panel .axis { margin: -4px 35px 0 28px; }
.input-panel .axis p { margin-bottom: 7px; line-height: 8px; }
.input-panel .axis-pair { grid-template-columns: 196px 1fr; padding: 9px 0 2px 50px; }
.input-panel .states { gap: 31px; padding-top: 45px; }
.field-grid { display: grid; grid-template-columns: 1fr 1fr; gap: 21px 58px; padding: 39px 56px 47px 30px; }
.field { display: flex; align-items: center; gap: 5px; height: 20px; padding: 0 6px; border: 1px solid #dcdcde; border-radius: 3px; background: #fff; color: var(--mid); }
.field input { flex: 1; width: 0; font-weight: 400; }
.field.filled input { color: var(--ink); font-weight: 500; }
.field.hover, .field.active { border-color: #85858a; }
.field.active .lead { color: var(--ink); }
.field.disabled { border-color: #f3f3f5; background: #f3f3f5; color: #bdbdbf; }
.field.disabled input { color: #a8a8aa; font-weight: 400; }
.field.disabled input::placeholder { color: #c8c8ca; }
.field.late { margin-top: 2px; }
.field.success { margin-top: 5px; }
.field.success.late { margin-top: 7px; }
.field.error { border-color: #f6525c; }
.field.error .info { color: #f2000f; }
.field.success { border-color: #6ec27d; }
.field.success .info { color: #30a846; }
.field.filled.error .lead, .field.filled.success .lead { color: var(--ink); }

.search-panel { grid-template-columns: 79px minmax(0, 1fr); padding: 46px 52px 0 39px; font-size: 9px; line-height: 12px; }
.search-panel .axis { --stem: 9px; margin-left: 98px; width: 489px; }
.search-panel .axis p { margin-bottom: 9px; }
.search-panel .axis-pair { grid-template-columns: 266px 1fr; padding: 15px 0 3px 69px; }
.search-panel .states { gap: 58px; padding-top: 31px; }
.search-frame { --d: 7px; --p: 10px; display: grid; grid-template-columns: 1fr 1fr; gap: 108px; padding: 26px 37px 74px; }
.search-grid { display: grid; grid-template-columns: 1fr 1fr; gap: 39px 82px; }
.search-grid .field { gap: 7px; height: 27px; border-radius: 4px; padding: 0 6px; background: #f9f9f9; }
.search-grid .lead { color: #4d4c52; }
.search-grid .default { margin-bottom: 8px; }
.search-grid.is-clear .field, .search-grid .field.active { background: #fff; }
.search-grid .field.disabled, .search-grid.is-clear .field.disabled { border-color: #ededee; background: #f3f3f5; }
.search-grid .disabled .lead { color: #c8c8ca; }

/* Select menus */
.select-panel { display: flex; gap: 22px; padding: 30px 0 0 26px; color: #4d4c52; font-size: 8px; line-height: 10px; }
.select-pair { display: flex; flex: none; gap: 34px; }
.picker { width: 166px; }
.picker > label { display: block; }
.picker-box { display: grid; align-items: center; height: 24px; margin: 5px 0 6px; padding: 0 7px; border: 1px solid #85858a; border-radius: 4px; color: var(--ink); }
.picker-box select { grid-area: 1 / 1; font-weight: 500; }
.picker-box .icon { grid-area: 1 / 1; justify-self: end; margin-right: 2px; }
.menu { position: relative; display: grid; align-content: space-between; height: 158px; padding: 3px 5px 4px; border-radius: 4px; box-shadow: 0 3px 7px #0000000f, 0 0 2px #0000000f; }
.menu.has-search { height: 184px; }
.menu.scrolls { padding-right: 11px; }
.menu.scrolls::after { content: ""; position: absolute; top: 18px; right: 4px; width: 2px; height: 47px; border-radius: 1px; background: #e0e0e2; }
.menu li { display: flex; align-items: center; height: 23px; padding: 0 7px; border-radius: 2px; }
.menu li.is-on { background: #f3f3f5; }
.menu li.menu-search { gap: 6px; padding: 0 5px; border: 1px solid #d4d4d6; border-radius: 4px; }
.menu-search input { flex: 1; }
.menu label { display: flex; align-items: center; gap: 7px; padding-left: 2px; }
.menu-search .icon { color: var(--ink); }

/* Modal and toasts */
.row-modal { display: grid; grid-template-columns: minmax(0, 428fr) minmax(0, 272fr); gap: 32px; margin-top: 32px; }
.modal-panel { padding: 16px 20px 31px; background: #f4f4f4; }
.modal { padding: 0 16px; border-radius: 10px; background: #fff; font-size: 11px; line-height: 16px; }
.modal header { display: flex; justify-content: space-between; padding: 18px 0 12px; border-bottom: 1px solid #eee; }
.modal h3 { color: #35343a; font-size: 16px; font-weight: 600; line-height: 20px; }
.modal header p { margin-top: 9px; color: #817f9b; line-height: 14px; }
.modal .round { width: 25px; height: 25px; }
.modal-body { padding: 22px 19px 51px; color: #35343a; }
.modal-body h4 { margin-bottom: 14px; color: #0b0a0f; font-size: 13px; font-weight: 600; }
.modal-body p { white-space: nowrap; }
.modal footer { display: flex; align-items: center; gap: 27px; padding: 15px 0 16px; border-top: 1px solid #eee; }
.modal footer label { display: flex; align-items: center; gap: 7px; margin: 0 auto 0 3px; color: #6b6a70; }
.modal .solid { width: 64px; height: 32px; border-radius: 6px; }

.toast-panel { padding: 22px 18px 3px; background: #f4f4f4; }
.toast-frame { display: grid; gap: 17px; justify-content: center; padding: 36px 0; }
.toast { --t: #0b0a0f; display: grid; grid-template-columns: 9px 1fr auto; column-gap: 4px; align-content: start; width: 163px; height: 48px; padding: 7px 10px 0 7px; border: 1px solid #e0e0e2; border-radius: 3px; background: #fff; font-size: 5px; line-height: 7px; }
.toast h3 { color: var(--t); font-size: 6px; font-weight: 600; line-height: 9px; }
.toast p { grid-column: 1 / -1; margin-top: 6px; color: #35343a; white-space: nowrap; }
.toast > .icon { color: var(--purple); }
.t-blue { --t: #0080ff; border-color: #4da6fc; background: #f2f8ff; }
.t-green { --t: #30a846; border-color: #6ec27d; background: #f4fbf6; }
.t-yellow { --t: #ffb000; border-color: #ffc54d; background: #fffaf2; }
.t-red { --t: #f2000f; border-color: #f6525c; background: #fef2f3; }
.t-green > .icon, .t-yellow > .icon, .t-red > .icon { color: var(--t); }

/* Button matrix */
.row-button { display: grid; grid-template-columns: minmax(0, 548fr) minmax(0, 160fr); gap: 24px; margin-top: 28px; }
.button-panel { display: grid; grid-template-columns: 18px minmax(0, 1fr); grid-template-rows: auto auto 1fr; padding: 6px 0 0 8px; font-size: 2px; line-height: 3px; }
.matrix-top, .cols { color: #4da6fc; font-style: italic; font-weight: 500; }
.matrix-top { grid-column: 2; width: 498px; padding-left: 8px; text-align: center; }
.button-panel .bracket { --stem: 2px; color: #d5eaff; }
.button-panel .bracket::after { height: 2px; }
.matrix-bracket { margin: 2px 4px 7px 5px; }
.groups { display: grid; grid-template-columns: 114px 110px 138px 128px; }
.groups > div { padding: 0 4px 0 5px; }
.groups .g-medium { padding: 0 17px 0 14px; }
.groups .bracket { margin-top: 1px; }
.groups span { display: block; }
.matrix-mid { grid-column: 2; display: grid; align-items: center; margin-top: 4px; }
.matrix-mid > * { grid-area: 1 / 1; }
.cols { display: grid; grid-template-columns: 32px 42px 40px 32px 44px 34px 52px 30px 56px 34px 54px 40px; padding-left: 8px; place-items: center; }
.button-panel .states { gap: 14px; padding-top: 12px; }
.matrix { --c: #e9dafd; --d: 2px; --p: 3px; padding: 9px 0 0 8px; display: grid; align-content: start; gap: 9px; background-size: 100% 1px, 0 0, 1px 100%, 0 0; }
.matrix .cols { padding: 0; height: 8px; font-style: normal; }
.matrix button { gap: 1px; border-radius: 1px; color: #fff; }
.matrix button svg { width: 2px; height: 3px; fill: none; stroke: currentColor; stroke-width: 4; }
.s0 button { background: #5700b5; }
.s1 button { background: #7e22e2; }
.s2 button { background: #3e007d; }
.matrix .s3 button { background: #c8c8c8; color: #8a8a8c; }
.xs { width: 8px; height: 4px; }
.sm { width: 10px; height: 5px; }
.md { width: 12px; height: 7px; }
.lg { width: 15px; height: 8px; }
.xs.wide { width: 10px; }
.sm.wide { width: 13px; }
.md.wide { width: 16px; }
.lg.wide { width: 20px; }

.popup-panel { padding: 8px 9px 11px 10px; background: #f4f4f4; }
.popup { padding: 15px 6px 7px; border-radius: 4px; background: #fff; text-align: center; }
.halo { display: grid; place-items: center; width: 30px; height: 30px; margin: 0 auto; border: 3px solid #f2f8ff; border-radius: 50%; background: #e5f2ff; color: var(--blue); }
.popup h3 { margin-top: 7px; color: var(--ink); font-size: 6px; font-weight: 600; line-height: 8px; }
.popup p { margin-top: 6px; color: #4d4c52; font-size: 4px; line-height: 6px; white-space: nowrap; }
.popup footer { display: grid; grid-template-columns: 1fr 1fr; gap: 4px; margin-top: 11px; font-size: 4px; }
.popup button { height: 13px; border-radius: 2px; }

/* Filter panel */
.filter-panel { padding: 19px 30px 25px 24px; }
.filter-card { border: 1px solid #e8e8e8; border-radius: 7px; box-shadow: 0 4px 8px #0000000d; }
.filter-card header { display: flex; align-items: center; justify-content: space-between; height: 43px; padding: 0 13px; color: var(--mid); font-size: 10px; }
.filter-card header span { font-weight: 500; }
.filter-card header button { gap: 7px; color: var(--blue); font-weight: 500; }
.filter-card header .icon { color: #2f7bff; }
.filter-list { position: relative; padding: 0 23px 0 6px; border: 1px solid #e8e8e8; border-width: 1px 0; font-size: 12px; }
.filter-list > button { justify-content: space-between; width: 100%; height: 35px; padding: 0 8px 0 11px; border-bottom: 1px solid #f3f3f3; color: #35343a; font-weight: 500; }
.filter-list .icon { stroke-width: 3; color: var(--ink); }
.filter-list > .is-open { border: 0; }
.filter-list > button:last-child { height: 34px; border: 0; }
.subs { border-bottom: 1px solid #f3f3f3; color: #5c5b61; }
.subs label { display: flex; align-items: center; gap: 10px; height: 35px; padding-left: 14px; }
.subs label:last-child { height: 34px; }
.v-scroll { position: absolute; top: 20px; right: 6px; width: 3px; height: 70px; border-radius: 2px; background: #e3e3e3; }
.filter-card footer { display: flex; justify-content: flex-end; gap: 7px; padding: 10px 13px 9px 0; font-size: 9px; }
.filter-card footer button { width: 44px; height: 21px; border-radius: 3px; }
```
FILE: app.js
```js
const icon = (id, cls) => `<svg class="icon ${cls}" aria-hidden="true"><use href="#${id}"/></svg>`;
const fill = (sel, html) => { document.querySelector(sel).innerHTML = html; };

// Colour ramps, darkest step first
const ramps = {
  neutral: ['#08080c', '#19181d', '#343339', '#5b5a60', '#9b9b9c', '#c8c8c8', '#e5e5e5', '#f3f4f6', '#f9f9f9', '#ffffff'],
  purple: ['#12001f', '#28004f', '#3e007d', '#5700b5', '#7e22e2', '#9f4bfc', '#b983fb', '#e5cffe', '#f1e7fe', '#f8f2ff'],
  blue: ['#001833', '#003263', '#004c93', '#0064c6', '#0080ff', '#4da6fc', '#99ccff', '#cfe4fe', '#e5f2ff', '#f2f8ff'],
  yellow: ['#332200', '#664500', '#996700', '#cc8a00', '#ffb000', '#ffc54d', '#ffde99', '#ffeecc', '#fff7e5', '#fffaf2'],
  green: ['#09210e', '#13431c', '#1c6429', '#268637', '#30a846', '#6ec27d', '#acdcb4', '#d5eeda', '#eaf6ec', '#f4fbf6'],
  red: ['#300003', '#610006', '#900009', '#c2000d', '#f2000f', '#f6525c', '#fa999f', '#fdcccf', '#fde5e7', '#fef2f3']
};
document.querySelectorAll('[data-ramp]').forEach((el) => {
  const last = el.dataset.ramp === 'neutral' ? [200, 100, 'white'] : [200, 100, 50];
  const steps = [900, 800, 700, 600, 500, 400, 300, ...last];
  const darkCount = el.dataset.ramp === 'neutral' ? 5 : 6;
  el.innerHTML = ramps[el.dataset.ramp]
    .map((c, i) => `<span class="${i < darkCount ? 'on-dark' : ''}" style="background:${c}">${steps[i]}</span>`).join('');
});

fill('#rows', `<tr>
  <td><input type="checkbox" class="check c9" aria-label="Select row"></td>
  <td><div class="person"><i>BN</i><b>Title</b><small>Meta data</small></div></td>
  <td><div class="new">Title<b>NEW</b></div></td>
  <td><span class="pill">Confirmed</span></td>
  <td><div class="acts"><button aria-label="Edit">${icon('pen', 'i12')}</button><button class="del" aria-label="Delete">${icon('trash', 'i11')}</button><button class="see" aria-label="View">${icon('eye', 'i12')}</button></div></td>
</tr>`.repeat(10));

const field = (state, filled, late) => `<div class="field ${state} ${filled ? 'filled' : ''} ${late ? 'late' : ''}">
  ${icon('mail', 'i10 lead')}<input aria-label="${state} field" ${filled ? 'value' : 'placeholder'}="Placeholder" ${state === 'disabled' ? 'disabled' : ''}>${icon('info', 'i10 info')}</div>`;
fill('#fields', ['default', 'hover', 'active', 'disabled', 'error', 'success']
  .map((s, i) => field(s, s === 'active', i > 3) + field(s, true, false)).join(''));

const searchField = (state, filled) => {
  const text = state === 'active' ? 'Search here' : 'Search here...';
  const on = filled || state === 'active';
  return `<div class="field ${state} ${on ? 'filled' : ''}">${icon('search', 'i12 lead')}<input aria-label="${state} search" ${on ? 'value' : 'placeholder'}="${text}" ${state === 'disabled' ? 'disabled' : ''}></div>`;
};
document.querySelectorAll('.search-grid').forEach((grid) => {
  grid.innerHTML = ['default', 'hover', 'active', 'disabled'].map((s) => searchField(s, false) + searchField(s, true)).join('');
});

const picker = (n, search, checks) => {
  const option = (i) => `<li class="${i === 2 ? 'is-on' : ''}">${checks ? '<label><input type="checkbox" class="check c9">Option 1</label>' : 'Option 1'}</li>`;
  return `<div class="picker"><label for="pick${n}">Label</label>
    <div class="picker-box"><select id="pick${n}"><option>Select</option></select>${icon('up', 'i8')}</div>
    <ul class="menu ${search || checks ? 'scrolls' : ''} ${search ? 'has-search' : ''}">
      ${search ? `<li class="menu-search">${icon('search', 'i11')}<input aria-label="Search options" placeholder="Search here..."></li>` : ''}
      ${[0, 1, 2, 3, 4, 5].map(option).join('')}
    </ul></div>`;
};
fill('#selects', `<div class="select-pair">${picker(1, false, false)}${picker(2, true, false)}</div>
  <div class="select-pair">${picker(3, false, true)}${picker(4, true, true)}</div>`);

fill('#variants', ['Icon Off', 'Left icon On', 'Right icon On'].map((t) => `<span>${t}</span>`).join('').repeat(4));
const dot = '<svg viewBox="0 0 12 20"><path d="M2 2h8v16H2z"/></svg>';
fill('#matrix', [0, 1, 2, 3].map((s) => `<div class="cols s${s}">` + ['xs', 'sm', 'md', 'lg'].map((z) =>
  `<button class="${z}">Button</button><button class="${z} wide">${dot}Button</button><button class="${z} wide">Button${dot}</button>`).join('') + '</div>').join(''));
```
